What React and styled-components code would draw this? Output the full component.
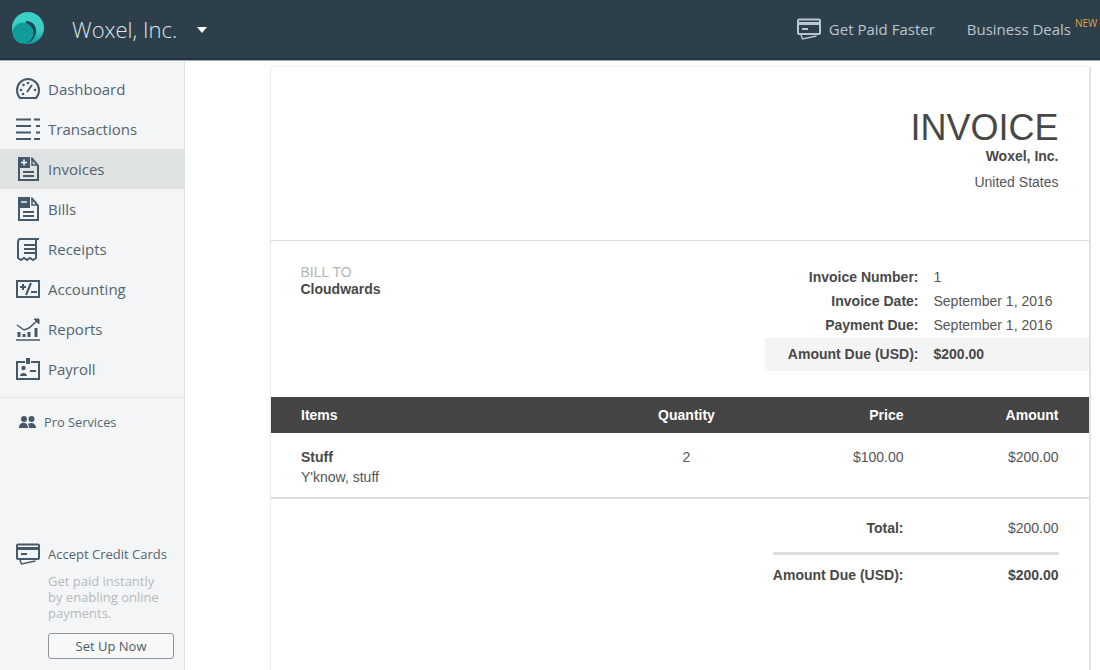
import styled, { createGlobalStyle } from 'styled-components';

const GlobalStyle = createGlobalStyle`
  html, body {
    margin: 0;
    height: 100%;
    overflow: hidden;
    background: #fff;
  }
  #root {
    height: 100%;
  }
`;

const Page = styled.div`
  width: 1100px;
  height: 670px;
  display: flex;
  flex-direction: column;
  overflow: hidden;
`;

const Header = styled.header`
  height: 61px;
  flex: none;
  box-sizing: border-box;
  background: #2e3f4c;
  border-bottom: 1px solid #a3afb6;
  box-shadow: inset 0 -2px 0 #253340;
  display: flex;
  align-items: center;
  padding: 0 0 1px 11px;
  font-family: 'Open Sans', sans-serif;
`;

const LogoMark = styled.svg`
  margin-top: -3px;
`;

const Brand = styled.div`
  font-size: 22px;
  font-weight: 300;
  color: #dce4e8;
  margin: -1px 0 0 28px;
`;

const Caret = styled.span`
  width: 0;
  height: 0;
  margin-left: 20px;
  margin-top: 1px;
  border-left: 5px solid transparent;
  border-right: 5px solid transparent;
  border-top: 6px solid #fff;
`;

const HeaderLinks = styled.nav`
  margin: 0 0 1px auto;
  display: flex;
  align-items: center;
  color: #b9c6cd;
  font-size: 15px;
`;

const HeaderLink = styled.div`
  display: flex;
  align-items: center;
  gap: 8px;
  margin-right: 32px;
  &:last-child {
    margin-right: 0;
  }
`;

const NewTag = styled.span`
  color: #d9a441;
  font-size: 10px;
  align-self: flex-start;
  margin: -2px 0 0 -4px;
  line-height: 12px;
  width: 25px;
  overflow: hidden;
`;

const Body = styled.div`
  flex: 1;
  min-height: 0;
  display: flex;
`;

const Sidebar = styled.aside`
  width: 185px;
  flex: none;
  box-sizing: border-box;
  background: #f4f5f6;
  border-right: 1px solid #dcdfe0;
  padding-top: 8px;
  display: flex;
  flex-direction: column;
  font-family: 'Open Sans', sans-serif;
`;

const NavItem = styled.div`
  height: 40px;
  display: flex;
  align-items: center;
  gap: 8px;
  padding-left: 16px;
  font-size: 15px;
  color: #53656f;
  background: ${props => (props.$active ? '#dfe2e2' : 'transparent')};
`;

const IconBox = styled.span`
  width: 24px;
  height: 24px;
  display: flex;
  align-items: center;
  justify-content: center;
  color: #44596a;
`;

const Divider = styled.div`
  height: 1px;
  background: #e3e5e6;
  margin-top: 8px;
`;

const ProLink = styled.div`
  display: flex;
  align-items: center;
  gap: 7px;
  padding: 15px 0 0 19px;
  font-size: 12.8px;
  color: #53656f;
`;

const Promo = styled.div`
  margin-top: auto;
  padding: 0 10px 11px 16px;
`;

const PromoTitle = styled.div`
  display: flex;
  align-items: center;
  gap: 8px;
  font-size: 13px;
  color: #53656f;
`;

const PromoText = styled.p`
  margin: 7px 10px 12px 32px;
  font-size: 13px;
  line-height: 16px;
  color: #b4babd;
`;

const PromoButton = styled.button`
  display: block;
  margin-left: 32px;
  width: 126px;
  height: 26px;
  padding: 0;
  box-sizing: border-box;
  background: #f8f8f8;
  border: 1px solid #8b979e;
  border-radius: 3px;
  font-family: 'Open Sans', sans-serif;
  font-size: 13px;
  color: #4d5c65;
`;

const Main = styled.main`
  flex: 1;
  min-width: 0;
  padding: 6px 11px 0 86px;
`;

const Invoice = styled.section`
  height: 640px;
  background: #fff;
  box-shadow: 2px 0 0 #e2e2e2, -1px 0 0 #ececec, 0 -1px 2px rgba(0, 0, 0, 0.06);
  font-family: 'Liberation Sans', Arial, sans-serif;
  font-size: 14px;
  color: #555;
`;

const InvoiceHead = styled.div`
  height: 174px;
  box-sizing: border-box;
  border-bottom: 1px solid #dedede;
  padding: 43px 30.5px 0 0;
  text-align: right;
`;

const InvoiceTitle = styled.h1`
  margin: 0;
  font-size: 36px;
  line-height: 36px;
  font-weight: 400;
  color: #484848;
`;

const CompanyName = styled.div`
  margin-top: 1px;
  font-weight: 700;
  line-height: 18px;
  color: #484848;
`;

const CompanyCountry = styled.div`
  margin-top: 8px;
  line-height: 18px;
`;

const Meta = styled.div`
  display: flex;
  justify-content: space-between;
  padding-left: 29.5px;
  height: 156px;
  box-sizing: border-box;
  padding-top: 24px;
`;

const BillTo = styled.div`
  line-height: 16px;
`;

const BillLabel = styled.div`
  margin: -1px 0 1px;
  color: #b5b5b5;
`;

const BillName = styled.div`
  font-weight: 700;
  color: #484848;
`;

const MetaTable = styled.div`
  width: 324px;
`;

const MetaRow = styled.div`
  display: grid;
  grid-template-columns: 153.5px 1fr;
  column-gap: 15px;
  height: 24px;
  align-items: center;
`;

const MetaDue = styled(MetaRow)`
  height: 33px;
  box-sizing: border-box;
  padding-bottom: 2px;
  margin-top: 1px;
  background: #f4f4f4;
`;

const MetaLabel = styled.div`
  font-weight: 700;
  text-align: right;
  color: #484848;
`;

const MetaValue = styled.div`
  font-weight: ${props => (props.$bold ? 700 : 400)};
  color: ${props => (props.$bold ? '#484848' : '#555')};
`;

const ItemGrid = styled.div`
  display: grid;
  grid-template-columns: 1fr 58px 188px 155px;
  padding: 0 30.5px 0 30px;
`;

const ItemsHead = styled(ItemGrid)`
  height: 36px;
  align-items: center;
  background: #444;
  color: #fff;
  font-weight: 700;
`;

const ItemRow = styled(ItemGrid)`
  height: 66px;
  box-sizing: border-box;
  padding-top: 14px;
  line-height: 20px;
  border-bottom: 2px solid #dedede;
`;

const Cell = styled.div`
  text-align: ${props => props.$align || 'left'};
  white-space: nowrap;
`;

const ItemName = styled.div`
  font-weight: 700;
  color: #484848;
`;

const Totals = styled.div`
  padding: 19px 30.5px 0 0;
  display: flex;
  flex-direction: column;
  align-items: flex-end;
`;

const TotalRow = styled.div`
  display: grid;
  grid-template-columns: 131px 155px;
  width: 286px;
  line-height: 20px;
  font-weight: ${props => (props.$bold ? 700 : 400)};
  color: ${props => (props.$bold ? '#484848' : '#555')};
`;

const TotalRule = styled.div`
  width: 286px;
  height: 3px;
  background: #dedede;
  margin: 14px 0 10px;
`;

const Strong = styled.span`
  font-weight: 700;
  color: #484848;
`;

function Logo() {
  return (
    <LogoMark width="33" height="34" viewBox="0 0 33 34">
      <defs>
        <linearGradient id="logoArc" x1="0" y1="0" x2="0" y2="1">
          <stop offset="0.55" stopColor="#3bcfc6" />
          <stop offset="1" stopColor="#129c99" />
        </linearGradient>
      </defs>
      <circle cx="17" cy="17" r="16" fill="url(#logoArc)" />
      <path d="M15 10c7 0 11 6 10 12-1 4-3 7-6 9-2 1-4 1-6 0z" fill="#1f4354" />
      <circle cx="12" cy="22" r="10.500" fill="#0f9c9b" />
    </LogoMark>
  );
}

const strokeProps = { fill: 'none', stroke: 'currentColor', strokeWidth: 2 };

function DashboardIcon() {
  return (
    <svg width="24" height="22" viewBox="0 0 24 22" {...strokeProps}>
      <path d="M4 20C2 18 1 15 1 12 1 6 6 1 12 1s11 5 11 11c0 3-1 6-3 8z" />
      <path d="M11 14l5-7" />
      <circle cx="5" cy="12" r="1.300" fill="currentColor" stroke="none" />
      <circle cx="7.500" cy="7" r="1.300" fill="currentColor" stroke="none" />
      <circle cx="12" cy="5" r="1.300" fill="currentColor" stroke="none" />
      <circle cx="19" cy="12" r="1.300" fill="currentColor" stroke="none" />
      <circle cx="7" cy="16" r="1.300" fill="currentColor" stroke="none" />
    </svg>
  );
}

function TransactionsIcon() {
  return (
    <svg width="24" height="22" viewBox="0 0 24 22" {...strokeProps}>
      <path d="M0 1.500h15M18 1.500h6M0 8h15M20 8h4M0 14.500h15M20 14.500h4M0 21h15M18 21h6" />
    </svg>
  );
}

function InvoiceIcon({ minus }) {
  return (
    <svg width="21" height="24" viewBox="0 0 21 24" {...strokeProps}>
      <path d="M13 1.500h1l6 7V23H1v-12" />
      <path d="M14 2v6h6" strokeWidth="1.500" />
      <rect x="0" y="0" width="12" height="11" fill="currentColor" stroke="none" />
      <path d={minus ? 'M3 5h6' : 'M3 5.500h6M6 2.500v6'} stroke="#f4f5f5" strokeWidth="1.500" />
      <path d="M5 15h11M5 19h11" />
    </svg>
  );
}

function ReceiptIcon() {
  return (
    <svg width="23" height="24" viewBox="0 0 23 24" {...strokeProps}>
      <path d="M22 2H3C1 2 1 4 1 6v15l3 2 3-2 3 2 3-2 3 2 3-2V3" />
      <path d="M7 8h11M7 12h11M7 16h11" />
    </svg>
  );
}

function AccountingIcon() {
  return (
    <svg width="24" height="18" viewBox="0 0 24 18" {...strokeProps}>
      <rect x="1" y="1" width="22" height="16" />
      <path d="M4 7h6M7 4v6M10 15l5-12M15 12h6" strokeWidth="2" />
    </svg>
  );
}

function ReportsIcon() {
  return (
    <svg width="24" height="23" viewBox="0 0 24 23" fill="none" stroke="currentColor">
      <path d="M1 7l7 5 5-2 9-8" strokeWidth="1.500" />
      <path d="M18 1h5v5z" fill="currentColor" />
      <path d="M3 14v5M8 16v3M13 14v5M20 10v9" strokeWidth="3" />
      <path d="M0 22h24" strokeWidth="1.500" />
    </svg>
  );
}

function PayrollIcon() {
  return (
    <svg width="24" height="22" viewBox="0 0 24 22" {...strokeProps}>
      <path d="M9 4H1v17h22V4h-8" />
      <rect x="10" y="0" width="4" height="6" fill="currentColor" stroke="none" />
      <circle cx="7.500" cy="10" r="2.200" fill="currentColor" stroke="none" />
      <path d="M4 18c0-4 7-4 7 0z" fill="currentColor" stroke="none" />
      <path d="M14 13h6" />
    </svg>
  );
}

function ProIcon() {
  return (
    <svg width="18" height="12" viewBox="0 0 18 12" fill="#46596a">
      <circle cx="5" cy="3" r="3" />
      <circle cx="12.500" cy="3" r="3" />
      <path d="M0 12c0-7 9-7 9 0zM10 12c0-2-.500-3-1-4 3-2 8-1 8 4z" />
    </svg>
  );
}

function CardIcon() {
  return (
    <svg width="24" height="22" viewBox="0 0 24 22" fill="none" stroke="currentColor">
      <rect x="1" y="1.500" width="22" height="14.500" rx="1" strokeWidth="2" />
      <path d="M1 5.500h22" strokeWidth="3" />
      <path d="M5 11h6" strokeWidth="2" />
      <path d="M4 17l1.500 4 14-3" strokeWidth="1.500" />
    </svg>
  );
}

function App() {
  const navItems = [
    { label: 'Dashboard', icon: <DashboardIcon /> },
    { label: 'Transactions', icon: <TransactionsIcon /> },
    { label: 'Invoices', icon: <InvoiceIcon />, active: true },
    { label: 'Bills', icon: <InvoiceIcon minus /> },
    { label: 'Receipts', icon: <ReceiptIcon /> },
    { label: 'Accounting', icon: <AccountingIcon /> },
    { label: 'Reports', icon: <ReportsIcon /> },
    { label: 'Payroll', icon: <PayrollIcon /> },
  ];

  return (
    <Page>
      <GlobalStyle />
      <Header>
        <Logo />
        <Brand>Woxel, Inc.</Brand>
        <Caret />
        <HeaderLinks>
          <HeaderLink>
            <CardIcon />
            Get Paid Faster
          </HeaderLink>
          <HeaderLink>
            Business Deals
            <NewTag>NEW</NewTag>
          </HeaderLink>
        </HeaderLinks>
      </Header>
      <Body>
        <Sidebar>
          {navItems.map(item => (
            <NavItem key={item.label} $active={item.active}>
              <IconBox>{item.icon}</IconBox>
              {item.label}
            </NavItem>
          ))}
          <Divider />
          <ProLink>
            <ProIcon />
            Pro Services
          </ProLink>
          <Promo>
            <PromoTitle>
              <IconBox><CardIcon /></IconBox>
              Accept Credit Cards
            </PromoTitle>
            <PromoText>Get paid instantly by enabling online payments.</PromoText>
            <PromoButton>Set Up Now</PromoButton>
          </Promo>
        </Sidebar>
        <Main>
          <Invoice>
            <InvoiceHead>
              <InvoiceTitle>INVOICE</InvoiceTitle>
              <CompanyName>Woxel, Inc.</CompanyName>
              <CompanyCountry>United States</CompanyCountry>
            </InvoiceHead>
            <Meta>
              <BillTo>
                <BillLabel>BILL TO</BillLabel>
                <BillName>Cloudwards</BillName>
              </BillTo>
              <MetaTable>
                <MetaRow>
                  <MetaLabel>Invoice Number:</MetaLabel>
                  <MetaValue>1</MetaValue>
                </MetaRow>
                <MetaRow>
                  <MetaLabel>Invoice Date:</MetaLabel>
                  <MetaValue>September 1, 2016</MetaValue>
                </MetaRow>
                <MetaRow>
                  <MetaLabel>Payment Due:</MetaLabel>
                  <MetaValue>September 1, 2016</MetaValue>
                </MetaRow>
                <MetaDue>
                  <MetaLabel>Amount Due (USD):</MetaLabel>
                  <MetaValue $bold>$200.00</MetaValue>
                </MetaDue>
              </MetaTable>
            </Meta>
            <ItemsHead>
              <Cell>Items</Cell>
              <Cell $align="center">Quantity</Cell>
              <Cell $align="right">Price</Cell>
              <Cell $align="right">Amount</Cell>
            </ItemsHead>
            <ItemRow>
              <Cell>
                <ItemName>Stuff</ItemName>
                Y'know, stuff
              </Cell>
              <Cell $align="center">2</Cell>
              <Cell $align="right">$100.00</Cell>
              <Cell $align="right">$200.00</Cell>
            </ItemRow>
            <Totals>
              <TotalRow>
                <Cell $align="right"><Strong>Total:</Strong></Cell>
                <Cell $align="right">$200.00</Cell>
              </TotalRow>
              <TotalRule />
              <TotalRow $bold>
                <Cell $align="right">Amount Due (USD):</Cell>
                <Cell $align="right">$200.00</Cell>
              </TotalRow>
            </Totals>
          </Invoice>
        </Main>
      </Body>
    </Page>
  );
}

export default App;
